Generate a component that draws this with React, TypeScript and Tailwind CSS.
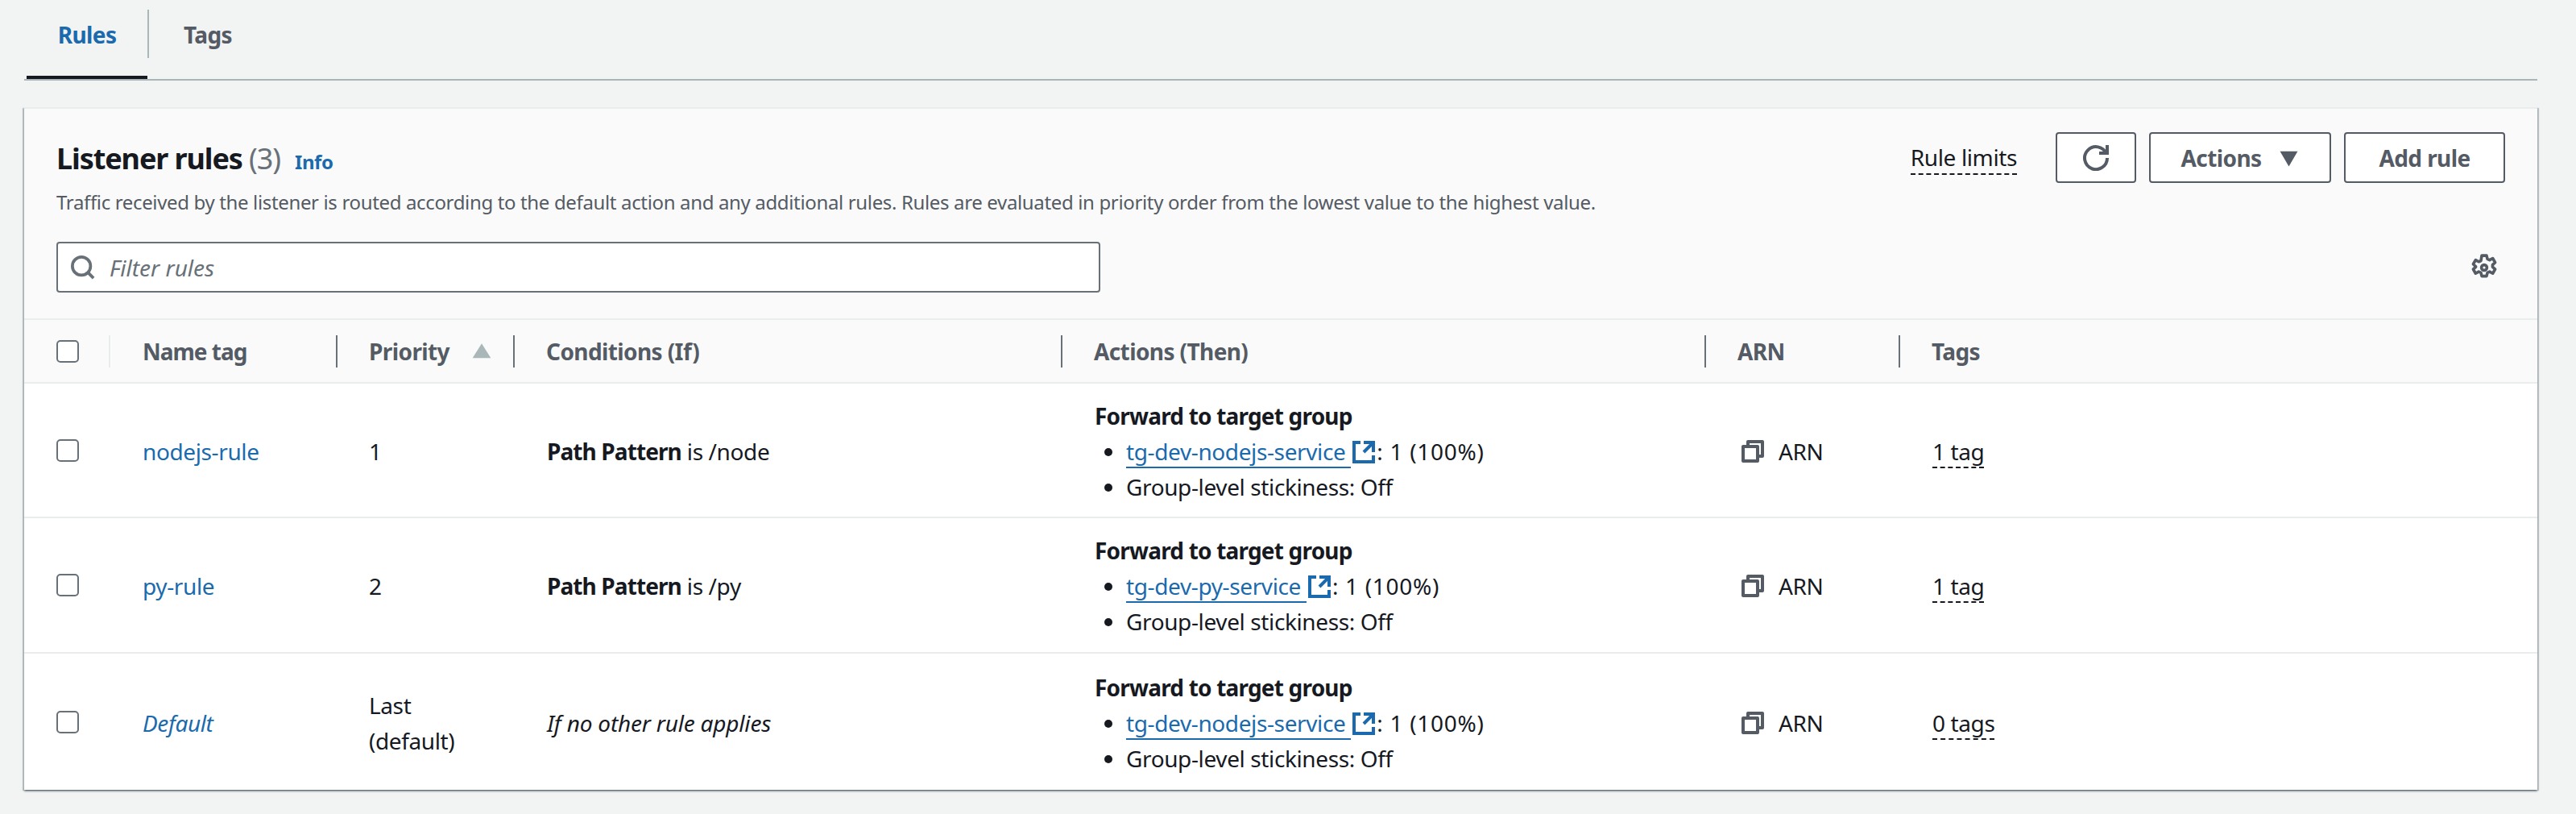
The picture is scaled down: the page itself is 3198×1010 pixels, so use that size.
import React from 'react';

/* ================= DATA ================= */

interface Rule {
  name: string;
  priority: string[];
  field?: string;
  value: string;
  target: string;
  tags: string;
  isDefault?: boolean;
}

const rules: Rule[] = [
  { name: 'nodejs-rule', priority: ['1'], field: 'Path Pattern', value: ' is /node', target: 'tg-dev-nodejs-service', tags: '1 tag' },
  { name: 'py-rule', priority: ['2'], field: 'Path Pattern', value: ' is /py', target: 'tg-dev-py-service', tags: '1 tag' },
  { name: 'Default', priority: ['Last', '(default)'], value: 'If no other rule applies', target: 'tg-dev-nodejs-service', tags: '0 tags', isDefault: true },
];

/* ================= ICONS ================= */

const Refresh = () => (
  <svg viewBox="0 0 16 16" className="w-8 h-8 fill-none stroke-[#545b64] stroke-2">
    <path d="M10 5h5V0" />
    <path d="M15 8a7 7 0 1 1-.55-2.66" />
  </svg>
);

const Gear = () => (
  <svg viewBox="0 0 16 16" className="w-[34px] h-[34px] fill-none stroke-[#545b64] stroke-[1.7]">
    <path d="M6.6 1h2.8l.5 2 1.3.6 1.8-1 1.4 2.4-1.5 1.4v1.2l1.5 1.4-1.4 2.4-1.8-1-1.3.6-.5 2H6.6l-.5-2-1.3-.6-1.8 1-1.4-2.4 1.5-1.4V7.4L1.6 6l1.4-2.4 1.8 1 1.3-.6z" strokeLinejoin="round" />
    <circle cx="8" cy="8" r="1.6" />
  </svg>
);

const Search = () => (
  <svg viewBox="0 0 16 16" className="w-[30px] h-[30px] fill-none stroke-[#687078] stroke-2">
    <circle cx="7" cy="7" r="6" />
    <path d="M11.3 11.3 15 15" />
  </svg>
);

const External = () => (
  <svg viewBox="0 0 16 16" className="inline-block w-[32px] h-[32px] align-[-6px] fill-none stroke-[#1a6aad] stroke-2">
    <path d="M14 8V2H8M14 2 8 8M6 2H2v12h12v-4" />
  </svg>
);

const Copy = () => (
  <svg viewBox="0 0 16 16" className="w-8 h-8 fill-none stroke-[#545b64] stroke-2" strokeLinejoin="round">
    <path d="M2 5h9v9H2z" />
    <path d="M5 5V2h9v9h-3" />
  </svg>
);

const Checkbox = () => <span className="block w-[28px] h-[28px] bg-white border-2 border-[#687078] rounded-[5px]" />;

/* ================= COMPONENTS ================= */

const btn = 'h-[63px] flex items-center justify-center bg-white border-2 border-[#545b64] rounded-[4px] text-[28px] font-bold text-[#545b64] tracking-[-0.6px]';
const headDivider = 'flex items-center h-[40px] border-l-2 border-[#687078] pl-[39px] text-[28px] font-bold text-[#545b64] tracking-[-0.6px]';

export default function App() {
  return (
    <div className="min-h-screen bg-[#f2f3f3] pl-[30px] pr-[48px] pb-[30px] font-['Noto_Sans',sans-serif] text-[28px] text-[#16191f] tracking-[-0.38px]">
      {/* Tabs */}
      <div className="flex h-[100px] border-b-2 border-[#a9b6b7] font-bold tracking-[-0.6px]">
        <div className="ml-[3px] w-[150px] h-[98px] flex justify-center pt-[22px] border-b-4 border-[#16191f] text-[#1a6aad]">Rules</div>
        <div className="mt-[12px] h-[60px] border-l-2 border-[#aab7b8] pl-[43px] pt-[10px] text-[#545b64]">Tags</div>
      </div>

      {/* Card */}
      <div className="mt-[33px] bg-white border-t-2 border-[#eaeded] shadow-[0_2px_2px_0_rgba(0,28,36,0.4),2px_1px_1px_0_rgba(0,28,36,0.2),-2px_1px_1px_0_rgba(0,28,36,0.2)]">
        <div className="h-[262px] bg-[#fafafa] border-b-2 border-[#eaeded] px-[40px] pt-[29px]">
          <div className="flex justify-between">
            <div>
              <div className="flex items-baseline h-[63px] pt-[6px]">
                <h2 className="text-[36px] font-bold tracking-[-1.1px]">Listener rules <span className="font-normal text-[#687078]">(3)</span></h2>
                <span className="ml-[18px] text-[24px] font-bold text-[#1a6aad] tracking-[-0.4px]">Info</span>
              </div>
              <p className="mt-[6px] text-[24px] leading-[36px] text-[#545b64] tracking-[-0.35px]">
                Traffic received by the listener is routed according to the default action and any additional rules. Rules are evaluated in priority order from the lowest value to the highest value.
              </p>
            </div>
            <div className="flex items-center gap-[16px] h-[63px]">
              <span className="mr-[32px] border-b-2 border-dashed border-[#16191f] leading-[40px]">Rule limits</span>
              <div className={`${btn} w-[100px]`}><Refresh /></div>
              <div className={`${btn} w-[226px] gap-[22px] tracking-[-0.4px]`}>
                Actions
                <svg viewBox="0 0 16 16" className="w-[25px] h-[25px] fill-[#545b64]"><path d="M1 3h14L8 15z" /></svg>
              </div>
              <div className={`${btn} w-[200px]`}>Add rule</div>
            </div>
          </div>
          <div className="mt-[31px] flex items-center justify-between pr-[9px]">
            <div className="w-[1296px] h-[63px] flex items-center gap-[18px] pl-[16px] bg-white border-2 border-[#687078] rounded-[4px]">
              <Search />
              <span className="italic text-[#687078] tracking-[0px]">Filter rules</span>
            </div>
            <Gear />
          </div>
        </div>

        {/* Table */}
        <table className="w-full table-fixed border-collapse">
          <colgroup>
            <col className="w-[107px]" />
            <col className="w-[280px]" />
            <col className="w-[220px]" />
            <col className="w-[680px]" />
            <col className="w-[799px]" />
            <col className="w-[241px]" />
            <col />
          </colgroup>
          <thead>
            <tr className="h-[78px] bg-[#fafafa] border-b-2 border-[#eaeded]">
              <th className="pl-[40px]"><div className="flex items-center justify-between"><Checkbox /><span className="h-[40px] border-l-2 border-[#eaeded]" /></div></th>
              <th className="text-left font-bold"><div className="flex items-center h-[40px] pl-[40px] text-[28px] text-[#545b64] tracking-[-1px]">Name tag</div></th>
              <th className="text-left"><div className={`${headDivider} justify-between pr-[26px]`}>Priority<svg viewBox="0 0 16 16" className="w-[26px] h-[26px] fill-[#aab7b8]"><path d="M1 13h14L8 2z" /></svg></div></th>
              <th className="text-left"><div className={headDivider}>Conditions (If)</div></th>
              <th className="text-left"><div className={headDivider}>Actions (Then)</div></th>
              <th className="text-left"><div className={headDivider}>ARN</div></th>
              <th className="text-left"><div className={headDivider}>Tags</div></th>
            </tr>
          </thead>
          <tbody className="leading-[44px]">
            {rules.map((rule) => (
              <tr key={rule.name} className="h-[167px] even:h-[168px] border-b-2 border-[#eaeded] last:border-b-0 last:h-[170px]">
                <td className="pl-[40px]"><Checkbox /></td>
                <td className={`pl-[40px] pt-[2px] text-[#1a6aad] ${rule.isDefault ? 'italic' : ''}`}>{rule.name}</td>
                <td className="pl-[41px] pt-[2px]">
                  {rule.priority.map((line) => <div key={line}>{line}</div>)}
                </td>
                <td className="pl-[42px] pt-[2px]">
                  {rule.field ? <><b className="tracking-[-0.9px]">{rule.field}</b>{rule.value}</> : <i className="tracking-[-0.2px]">{rule.value}</i>}
                </td>
                <td className="pl-[42px] pt-[2px]">
                  <div className="font-bold tracking-[-0.8px]">Forward to target group</div>
                  <ul className="list-disc pl-[39px]">
                    <li><span className="text-[#1a6aad] border-b-2 border-[#1a6aad]">{rule.target}&nbsp;</span><External /><span className="tracking-[0.7px]">: 1 (100%)</span></li>
                    <li>Group-level stickiness: Off</li>
                  </ul>
                </td>
                <td className="pl-[44px] pt-[2px]">
                  <div className="flex items-center gap-[16px]"><Copy />ARN</div>
                </td>
                <td className="pl-[42px] pt-[2px]">
                  <span className="border-b-2 border-dashed border-[#16191f]">{rule.tags}</span>
                </td>
              </tr>
            ))}
          </tbody>
        </table>
      </div>
    </div>
  );
}
